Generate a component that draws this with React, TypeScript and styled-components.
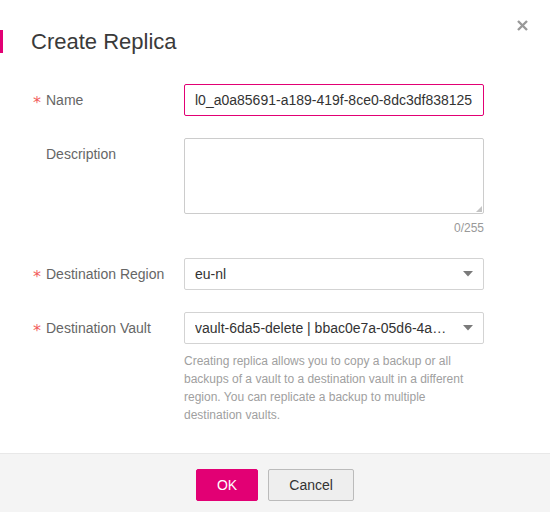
import styled, { createGlobalStyle } from "styled-components";

const GlobalStyle = createGlobalStyle`
  html, body {
    margin: 0;
    padding: 0;
    background: #ffffff;
  }
  * {
    box-sizing: border-box;
  }
`;

const Dialog = styled.div`
  width: 550px;
  height: 512px;
  display: flex;
  flex-direction: column;
  background: #ffffff;
  font-family: "Liberation Sans", Arial, sans-serif;
  position: relative;
`;

const Header = styled.div`
  display: flex;
  align-items: center;
  padding-top: 30px;
`;

const TitleBar = styled.span`
  width: 3px;
  height: 23px;
  background: #e20074;
`;

const Title = styled.h1`
  margin: 0 0 0 28px;
  font-size: 22px;
  line-height: 23px;
  font-weight: normal;
  color: #3a3a3a;
`;

const CloseButton = styled.button`
  position: absolute;
  top: 19px;
  right: 22px;
  width: 12px;
  height: 12px;
  padding: 0;
  border: none;
  background: transparent;
  cursor: pointer;
  display: flex;
  align-items: center;
  justify-content: center;
`;

const Body = styled.div`
  flex: 1;
  padding-top: 31px;
`;

const Row = styled.div<{ gapBelow?: number }>`
  display: grid;
  grid-template-columns: 184px 300px;
  margin-bottom: ${({ gapBelow }) => gapBelow ?? 22}px;
`;

const Label = styled.div`
  padding-left: 33px;
  font-size: 14px;
  line-height: 32px;
  color: #666666;
  display: flex;
  align-items: flex-start;
`;

const Star = styled.span<{ hidden?: boolean }>`
  width: 13px;
  color: #f25c5c;
  font-family: "DejaVu Sans", sans-serif;
  font-size: 16px;
  visibility: ${({ hidden }) => (hidden ? "hidden" : "visible")};
  display: inline-block;
  transform: translateY(3px);
`;

const Field = styled.div`
  display: flex;
  flex-direction: column;
`;

const TextInput = styled.input`
  width: 300px;
  height: 32px;
  padding: 0 10px;
  border: 1px solid #e20074;
  border-radius: 2px;
  font-family: inherit;
  font-size: 14px;
  color: #333333;
  outline: none;
  background: #ffffff;
`;

const TextAreaWrap = styled.div`
  position: relative;
  width: 300px;
  height: 76px;

  &::after {
    content: "";
    position: absolute;
    right: 2px;
    bottom: 2px;
    width: 0;
    height: 0;
    border-left: 6px solid transparent;
    border-bottom: 6px solid #c4c4c4;
    pointer-events: none;
  }
`;

const TextArea = styled.textarea`
  width: 300px;
  height: 76px;
  padding: 6px 10px;
  border: 1px solid #cccccc;
  border-radius: 2px;
  font-family: inherit;
  font-size: 14px;
  color: #333333;
  outline: none;
  resize: none;
  display: block;
`;

const Counter = styled.div`
  margin-top: 5px;
  text-align: right;
  font-size: 12px;
  line-height: 18px;
  color: #999999;
`;

const SelectBox = styled.div`
  width: 300px;
  height: 32px;
  padding: 0 10px;
  border: 1px solid #d3d3d3;
  border-radius: 2px;
  display: flex;
  align-items: center;
  gap: 10px;
  font-size: 14px;
  color: #333333;
  cursor: pointer;
`;

const SelectValue = styled.span`
  flex: 1;
  white-space: nowrap;
  overflow: hidden;
  text-overflow: ellipsis;
`;

const Help = styled.p`
  margin: 8px 0 0;
  font-size: 12px;
  line-height: 18px;
  color: #a0a0a0;
`;

const Footer = styled.div`
  height: 59px;
  border-top: 1px solid #e8e8e8;
  background: #f4f4f4;
  display: flex;
  justify-content: center;
  gap: 10px;
  padding-top: 15px;
`;

const Button = styled.button<{ primary?: boolean }>`
  height: 32px;
  min-width: ${({ primary }) => (primary ? "62px" : "86px")};
  padding: 0 20px;
  border-radius: 2px;
  border: 1px solid ${({ primary }) => (primary ? "#e20074" : "#bbbbbb")};
  background: ${({ primary }) => (primary ? "#e20074" : "#eeeeee")};
  color: ${({ primary }) => (primary ? "#ffffff" : "#333333")};
  font-family: inherit;
  font-size: 14px;
  cursor: pointer;
`;

const Caret = () => (
  <svg width="10" height="6" viewBox="0 0 10 6">
    <path d="M0 0 L10 0 L5 5.5 Z" fill="#7a7a7a" />
  </svg>
);

const Select = ({ value }: { value: string }) => (
  <SelectBox>
    <SelectValue>{value}</SelectValue>
    <Caret />
  </SelectBox>
);

export default function App() {
  return (
    <>
      <GlobalStyle />
      <Dialog>
        <Header>
          <TitleBar />
          <Title>Create Replica</Title>
        </Header>
        <CloseButton aria-label="Close">
          <svg width="11" height="11" viewBox="0 0 11 11">
            <path
              d="M1 1 L10 10 M10 1 L1 10"
              stroke="#999999"
              strokeWidth="2.4"
            />
          </svg>
        </CloseButton>

        <Body>
          <Row>
            <Label>
              <Star>*</Star>Name
            </Label>
            <TextInput
              readOnly
              value="l0_a0a85691-a189-419f-8ce0-8dc3df838125"
            />
          </Row>
          <Row gapBelow={21}>
            <Label>
              <Star hidden>*</Star>Description
            </Label>
            <Field>
              <TextAreaWrap>
                <TextArea />
              </TextAreaWrap>
              <Counter>0/255</Counter>
            </Field>
          </Row>
          <Row>
            <Label>
              <Star>*</Star>Destination Region
            </Label>
            <Select value="eu-nl" />
          </Row>
          <Row gapBelow={0}>
            <Label>
              <Star>*</Star>Destination Vault
            </Label>
            <Field>
              <Select value="vault-6da5-delete | bbac0e7a-05d6-4a5c-9f31-7e2a0c4d81b6" />
              <Help>
                Creating replica allows you to copy a backup or all backups of a
                vault to a destination vault in a different region. You can
                replicate a backup to multiple destination vaults.
              </Help>
            </Field>
          </Row>
        </Body>

        <Footer>
          <Button primary>OK</Button>
          <Button>Cancel</Button>
        </Footer>
      </Dialog>
    </>
  );
}
